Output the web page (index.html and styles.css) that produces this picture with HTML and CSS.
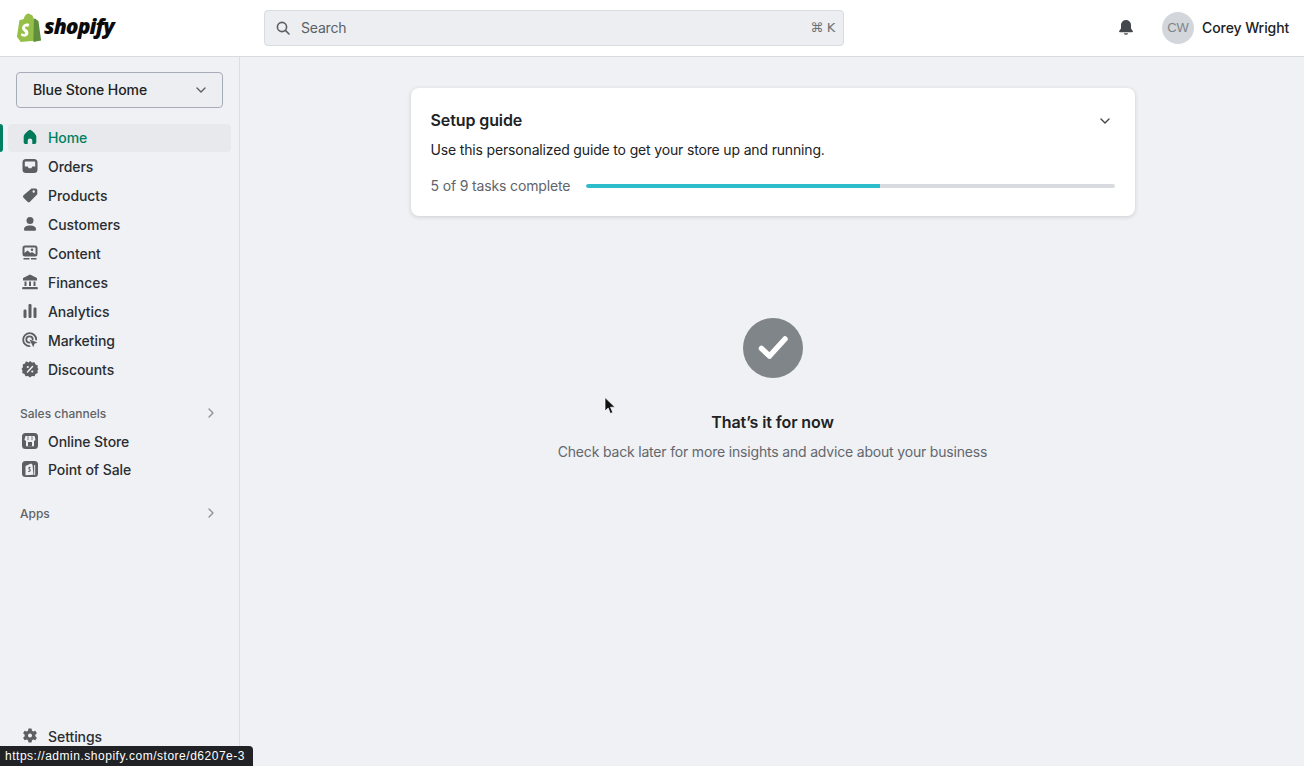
FILE: index.html
```html
<!DOCTYPE html>
<html lang="en">
<head>
<meta charset="utf-8">
<title>Shopify admin</title>
<link rel="stylesheet" href="styles.css">
</head>
<body>
<div class="app">
  <header class="topbar">
    <div class="brand">
      <svg class="bag" width="26" height="29" viewBox="2 0 25 30"><path d="M2 24.500 4.600 7.600 9 6.200C9.800 3 11.800 .8 14 .6c1 0 1.800.6 2.200 1.400l1.400-.2 2 4.200 3 22.400L6 30z" fill="#95bf47"/><path d="M19.600 6 21 5.900c.2 0 .4.100.5.300l2.800 2.300 2.700 19.900-8 1.600z" fill="#5e8e3e"/><path d="M14.800 11.500 14 14.300s-.9-.4-2-.4c-1.600 0-1.700 1-1.700 1.300 0 1.400 3.600 1.900 3.600 5.100 0 2.600-1.600 4.200-3.800 4.200-2.600 0-4-1.600-4-1.600l.7-2.300s1.400 1.200 2.500 1.200c.8 0 1.100-.6 1.100-1.100 0-1.800-3-1.900-3-4.900 0-2.500 1.800-4.900 5.400-4.900 1.300 0 2 .6 2 .6z" fill="#fff"/></svg>
      <span class="wordmark">shopify</span>
    </div>
    <div class="search">
      <svg class="ico-search" width="14" height="14" viewBox="0 0 14 14"><circle cx="6" cy="6" r="4.600" fill="none" stroke="#5c5f62" stroke-width="1.600"/><path d="m9.400 9.400 3.600 3.600" stroke="#5c5f62" stroke-width="1.600" stroke-linecap="round"/></svg>
      <span class="search-text">Search</span>
      <span class="search-key">⌘ K</span>
    </div>
    <svg class="bell" width="16" height="16" viewBox="0 0 16 16"><path d="M8 0a5 5 0 0 0-5 5v3.500L1.200 11c-.3.500 0 1.200.7 1.200h12.200c.7 0 1-.7.7-1.200L13 8.500V5a5 5 0 0 0-5-5z" fill="#44474c"/><path d="M5.800 13.200a2.300 2.300 0 0 0 4.400 0z" fill="#44474c"/></svg>
    <div class="avatar">CW</div>
    <span class="username">Corey Wright</span>
  </header>
  <div class="body">
    <aside class="sidebar">
      <button class="store"><span class="store-name">Blue Stone Home</span>
        <svg width="10" height="6" viewBox="0 0 10 6"><path d="m1 1 4 4 4-4" fill="none" stroke="#5c5f62" stroke-width="1.400" stroke-linecap="round" stroke-linejoin="round"/></svg>
      </button>
      <nav class="nav">
        <a class="item active"><svg class="icon" viewBox="0 0 16 16"><path d="M8 .8C9 .8 14.300 5.200 14.300 7.500v5.800c0 1-.7 1.700-1.700 1.700H10.300v-3.300a2.300 2.300 0 0 0-4.600 0V15H3.400c-1 0-1.700-.7-1.700-1.700V7.500C1.700 5.200 7 .8 8 .8z" fill="#007a5a"/></svg>Home</a>
        <a class="item"><svg class="icon" viewBox="0 0 16 16"><path d="M4 1h8a3.500 3.500 0 0 1 3.500 3.500v7A3.500 3.500 0 0 1 12 15H4A3.500 3.500 0 0 1 .5 11.500v-7A3.500 3.500 0 0 1 4 1zm-.5 2.500c-.4 0-.7.300-.7.700v4.300h2.900l1 1.800h2.600l1-1.800h2.900V4.200c0-.4-.3-.7-.7-.7z" fill="#5c5f62" fill-rule="evenodd"/></svg>Orders</a>
        <a class="item"><svg class="icon" viewBox="0 0 16 16"><path d="M9.500 1.500h4a1.800 1.800 0 0 1 1.800 1.800v4L8 14.700a1.800 1.800 0 0 1-2.500 0l-4-4a1.800 1.800 0 0 1 0-2.500zM11.700 3.300a1.200 1.200 0 1 0 0 2.400 1.200 1.200 0 0 0 0-2.400z" fill="#5c5f62" fill-rule="evenodd"/></svg>Products</a>
        <a class="item"><svg class="icon" viewBox="0 0 16 16"><circle cx="8" cy="4.500" r="3.500" fill="#5c5f62"/><path d="M2 13.500C2 10.500 4.500 9.500 8 9.500s6 1 6 4c0 .8-.6 1.300-1.300 1.300H3.300C2.600 14.800 2 14.300 2 13.500z" fill="#5c5f62"/></svg>Customers</a>
        <a class="item"><svg class="icon" viewBox="0 0 16 16"><path d="M3 .5h10A2.500 2.500 0 0 1 15.500 3v6A2.500 2.500 0 0 1 13 11.500H3A2.500 2.500 0 0 1 .5 9V3A2.500 2.500 0 0 1 3 .5zm-.5 2.500v5l3-2.500 3 2.500 1.500-1 3.500 2.500V3c0-.3-.2-.5-.5-.5H3c-.3 0-.5.200-.5.500zM10 3.500a1.300 1.300 0 1 1 0 2.600 1.300 1.300 0 0 1 0-2.600z" fill="#5c5f62" fill-rule="evenodd"/><path d="M1.500 13h6v1.500h-6zM9 13h5.500v1.500H9z" fill="#5c5f62"/></svg>Content</a>
        <a class="item"><svg class="icon" viewBox="0 0 16 16"><path d="M8 .5 15 4v2.500H1V4zM2.500 7.500h2v4.500h-2zM7 7.500h2v4.500H7zM11.500 7.500h2v4.500h-2zM1 13h14a.8.8 0 0 1 .8.8v1.400H.2v-1.400A.8.8 0 0 1 1 13z" fill="#5c5f62"/></svg>Finances</a>
        <a class="item"><svg class="icon" viewBox="0 0 16 16"><rect x="1.500" y="6.500" width="3" height="8.500" rx="1.200" fill="#5c5f62"/><rect x="6.500" y="1" width="3" height="14" rx="1.200" fill="#5c5f62"/><rect x="11.500" y="4.500" width="3" height="10.500" rx="1.200" fill="#5c5f62"/></svg>Analytics</a>
        <a class="item"><svg class="icon" viewBox="0 0 16 16"><path d="M7.500 14.200a6.500 6.500 0 1 1 6.700-6.700" fill="none" stroke="#5c5f62" stroke-width="1.800" stroke-linecap="round"/><path d="M7.500 10.700a3.200 3.200 0 1 1 3.200-3.200" fill="none" stroke="#5c5f62" stroke-width="1.800" stroke-linecap="round"/><path d="m7.500 7.500 8 3-3 1.200-1.200 3.500z" fill="#5c5f62"/></svg>Marketing</a>
        <a class="item"><svg class="icon icon-lg" viewBox="0 0 16 16"><path d="M8 0l2 1.500 2.500-.3 1 2.300 2.300 1-.3 2.500L16.500 8l-1 1.500.3 2.500-2.300 1-1 2.300-2.500-.3L8 16.500 6 15l-2.500.3-1-2.300-2.300-1 .3-2.500L-.5 8 1 6l-.3-2.500 2.300-1 1-2.300L6.500 1.500z" fill="#5c5f62"/><path d="m10.500 5.500-5 5.500" stroke="#eef0f3" stroke-width="1.500" stroke-linecap="round"/><circle cx="5.800" cy="6" r="1.100" fill="#eef0f3"/><circle cx="10.300" cy="10.500" r="1.100" fill="#eef0f3"/></svg>Discounts</a>
      </nav>
      <div class="section first">Sales channels
        <svg width="6" height="10" viewBox="0 0 6 10"><path d="m1 1 4 4-4 4" fill="none" stroke="#8c9196" stroke-width="1.300" stroke-linecap="round" stroke-linejoin="round"/></svg>
      </div>
      <a class="item channel"><svg class="icon icon-lg" viewBox="0 0 16 16"><rect width="16" height="16" rx="3.500" fill="#5c5f62"/><path d="M3.500 3h9l1 3.500a1.500 1.500 0 0 1-1.500 1.300v5.400H4V7.800a1.500 1.500 0 0 1-1.500-1.300z" fill="#eef0f3"/><path d="M6 9h4v4.200H6z" fill="#5c5f62"/><path d="M6 3.200v4M10 3.200v4" stroke="#5c5f62" stroke-width=".8"/></svg>Online Store</a>
      <a class="item channel"><svg class="icon icon-lg" viewBox="0 0 16 16"><rect width="16" height="16" rx="3.500" fill="#5c5f62"/><path d="M3.500 5 9 2.500l1.500 1.200 1 10-8 .5z" fill="#eef0f3"/><path d="M8.500 6.500c-1.500-.5-2 .5-1.500 1.200l1 1c.6.800 0 2-1.800 1.500" fill="none" stroke="#5c5f62" stroke-width="1.100"/><path d="M12.700 4v10" stroke="#eef0f3"/></svg>Point of Sale</a>
      <div class="section second">Apps
        <svg width="6" height="10" viewBox="0 0 6 10"><path d="m1 1 4 4-4 4" fill="none" stroke="#8c9196" stroke-width="1.300" stroke-linecap="round" stroke-linejoin="round"/></svg>
      </div>
      <a class="item settings"><svg class="icon" viewBox="0 0 16 16"><path fill-rule="evenodd" d="M6.500 .5h3l.5 2.200 1.300.7 2.100-.7 1.500 2.600-1.600 1.500v1.400l1.600 1.500-1.500 2.600-2.100-.7-1.300.7-.5 2.200h-3l-.5-2.200-1.300-.7-2.100.7L1.100 9.700l1.600-1.500V6.800L1.100 5.300l1.500-2.600 2.100.7L6 2.700zM8 5.500a2 2 0 1 0 0 4 2 2 0 0 0 0-4z" fill="#5c5f62"/></svg>Settings</a>
    </aside>
    <main class="main">
      <section class="card">
        <div class="card-head">
          <h2 class="card-title">Setup guide</h2>
          <svg class="card-chevron" width="10" height="6" viewBox="0 0 10 6"><path d="m1 1 4 4 4-4" fill="none" stroke="#44474c" stroke-width="1.400" stroke-linecap="round" stroke-linejoin="round"/></svg>
        </div>
        <p class="card-text">Use this personalized guide to get your store up and running.</p>
        <div class="progress-row">
          <span class="progress-label">5 of 9 tasks complete</span>
          <div class="track"><div class="fill" style="width:55.6%"></div></div>
        </div>
      </section>
      <div class="done">
        <svg class="done-icon" width="60" height="60" viewBox="0 0 60 60"><circle cx="30" cy="30" r="30" fill="#7f8589"/><path d="m18.500 30.500 8 7.500 15.500-17" fill="none" stroke="#fff" stroke-width="5.500" stroke-linecap="round" stroke-linejoin="round"/></svg>
        <h3 class="done-title">That’s it for now</h3>
        <p class="done-text">Check back later for more insights and advice about your business</p>
      </div>
    </main>
  </div>
</div>
<svg class="cursor" width="12" height="18" viewBox="0 0 12 18"><path d="M1 .5v13.500l3.200-3 2.200 5.500 2.400-1-2.300-5.300H11z" fill="#111" stroke="#fff" stroke-width=".7"/></svg>
<div class="status">https://admin.shopify.com/store/d6207e-3</div>
</body>
</html>
```
FILE: styles.css
```css
* { box-sizing: border-box; }
html, body { height: 100%; }
body {
  margin: 0;
  overflow: hidden;
  font-family: Inter, "Liberation Sans", sans-serif;
  font-size: 14px;
  color: #202223;
  background: #eff1f4;
}
.app { display: flex; flex-direction: column; height: 766px; }
.topbar {
  flex: none;
  height: 57px;
  display: flex;
  align-items: center;
  background: #fff;
  border-bottom: 1px solid #d9dbde;
  padding: 0 15px 1px 16px;
}
.brand { width: 248px; display: flex; align-items: center; gap: 2px; flex: none; }
.bag { flex: none; }
.wordmark {
  font-family: "Open Sans", sans-serif;
  font-weight: 800;
  font-style: italic;
  font-size: 21px;
  letter-spacing: -0.9px;
  color: #0b0b0b;
  line-height: 1;
  margin-top: -3px;
}
.search {
  flex: none;
  width: 580px;
  height: 36px;
  display: flex;
  align-items: center;
  background: #eceef1;
  border: 1px solid #d8dbdf;
  border-radius: 4px;
  padding: 0 8px 0 11px;
  color: #5c5f66;
}
.ico-search { margin-right: 11px; }
.search-text { flex: 1; letter-spacing: -0.2px; }
.search-key { color: #6d7175; font-family: "DejaVu Sans", sans-serif; font-size: 13px; letter-spacing: -0.3px; }
.bell { margin-left: 274px; flex: none; }
.avatar {
  flex: none;
  margin-left: 28px;
  width: 32px;
  height: 32px;
  border-radius: 50%;
  background: #d3d7db;
  color: #7e8489;
  display: flex;
  align-items: center;
  justify-content: center;
  font-size: 13px;
  font-family: "Liberation Sans", sans-serif;
}
.username { margin-left: 8px; font-weight: 500; white-space: nowrap; letter-spacing: -0.08px; }
.body { flex: 1; display: flex; min-height: 0; }
.sidebar {
  flex: none;
  width: 240px;
  border-right: 1px solid #dcdee2;
  display: flex;
  flex-direction: column;
  padding-top: 15px;
}
.store {
  margin: 0 16px;
  width: 207px;
  height: 36px;
  flex: none;
  display: flex;
  align-items: center;
  justify-content: space-between;
  padding: 0 16px;
  background: #eceef1;
  border: 1px solid #a7adb8;
  border-radius: 4px;
  font: 500 14px Inter, sans-serif;
  color: #202223;
}
.store-name { margin-top: -2px; letter-spacing: -0.07px; }
.nav { margin-top: 16px; display: flex; flex-direction: column; gap: 1px; }
.item {
  display: flex;
  align-items: center;
  height: 28px;
  margin: 0 8px;
  padding: 0 0 2px 14px;
  border-radius: 4px;
  font-weight: 500;
  color: #2a2d31;
  position: relative;
  letter-spacing: -0.07px;
}
.icon { width: 16px; height: 16px; margin-right: 10px; flex: none; overflow: visible; }
.active { background: #e7e9ed; color: #008060; }
.active::before {
  content: "";
  position: absolute;
  left: -8px;
  top: 0;
  bottom: 0;
  width: 3px;
  background: #008060;
  border-radius: 0 3px 3px 0;
}
.section {
  display: flex;
  align-items: center;
  justify-content: space-between;
  padding: 0 25px 0 20px;
  font-size: 12px;
  font-weight: 500;
  color: #5f6368;
  height: 16px;
}
.section.first { margin-top: 21px; margin-bottom: 7px; }
.section.second { margin-top: 21px; }
.settings { margin-top: auto; margin-bottom: 15px; }
.main { flex: 1; display: flex; flex-direction: column; align-items: center; padding-top: 31px; min-width: 0; }
.card {
  width: 724px;
  height: 128px;
  margin-right: -1px;
  background: #fff;
  border-radius: 8px;
  box-shadow: 0 1px 4px rgba(60, 66, 80, .2);
  padding: 20px 20px 0 20px;
}
.card-head { display: flex; align-items: center; justify-content: space-between; height: 24px; padding-right: 5px; }
.card-chevron { margin-top: 2px; }
.card-title { margin: 0; font-size: 16px; font-weight: 600; line-height: 24px; letter-spacing: -0.1px; }
.card-text { margin: 8px 0 0; line-height: 20px; color: #202223; letter-spacing: -0.16px; }
.progress-row { display: flex; align-items: center; margin-top: 16px; height: 20px; }
.progress-label { width: 155px; flex: none; color: #60646b; letter-spacing: -0.15px; margin-top: -2px; }
.track { flex: 1; height: 4px; border-radius: 2px; background: #d9dbe1; overflow: hidden; }
.fill { height: 100%; background: #2cbcca; border-radius: 2px 0 0 2px; }
.done { display: flex; flex-direction: column; align-items: center; margin-top: 102px; margin-right: -1px; }
.done-icon { margin-left: 2px; }
.done-title { margin: 32px 0 0; font-size: 16px; font-weight: 600; line-height: 24px; letter-spacing: -0.1px; }
.done-text { margin: 8px 0 0; line-height: 20px; color: #63676d; letter-spacing: -0.18px; }
.cursor { position: absolute; left: 604px; top: 397px; }
.status {
  position: absolute;
  left: 0;
  bottom: 0;
  width: 253px;
  height: 20px;
  padding: 0 0 0 5px;
  background: #202225;
  color: #fff;
  border-radius: 0 4px 0 0;
  font: 12px/21px "Liberation Sans", sans-serif;
  letter-spacing: .52px;
  white-space: nowrap;
}
```
